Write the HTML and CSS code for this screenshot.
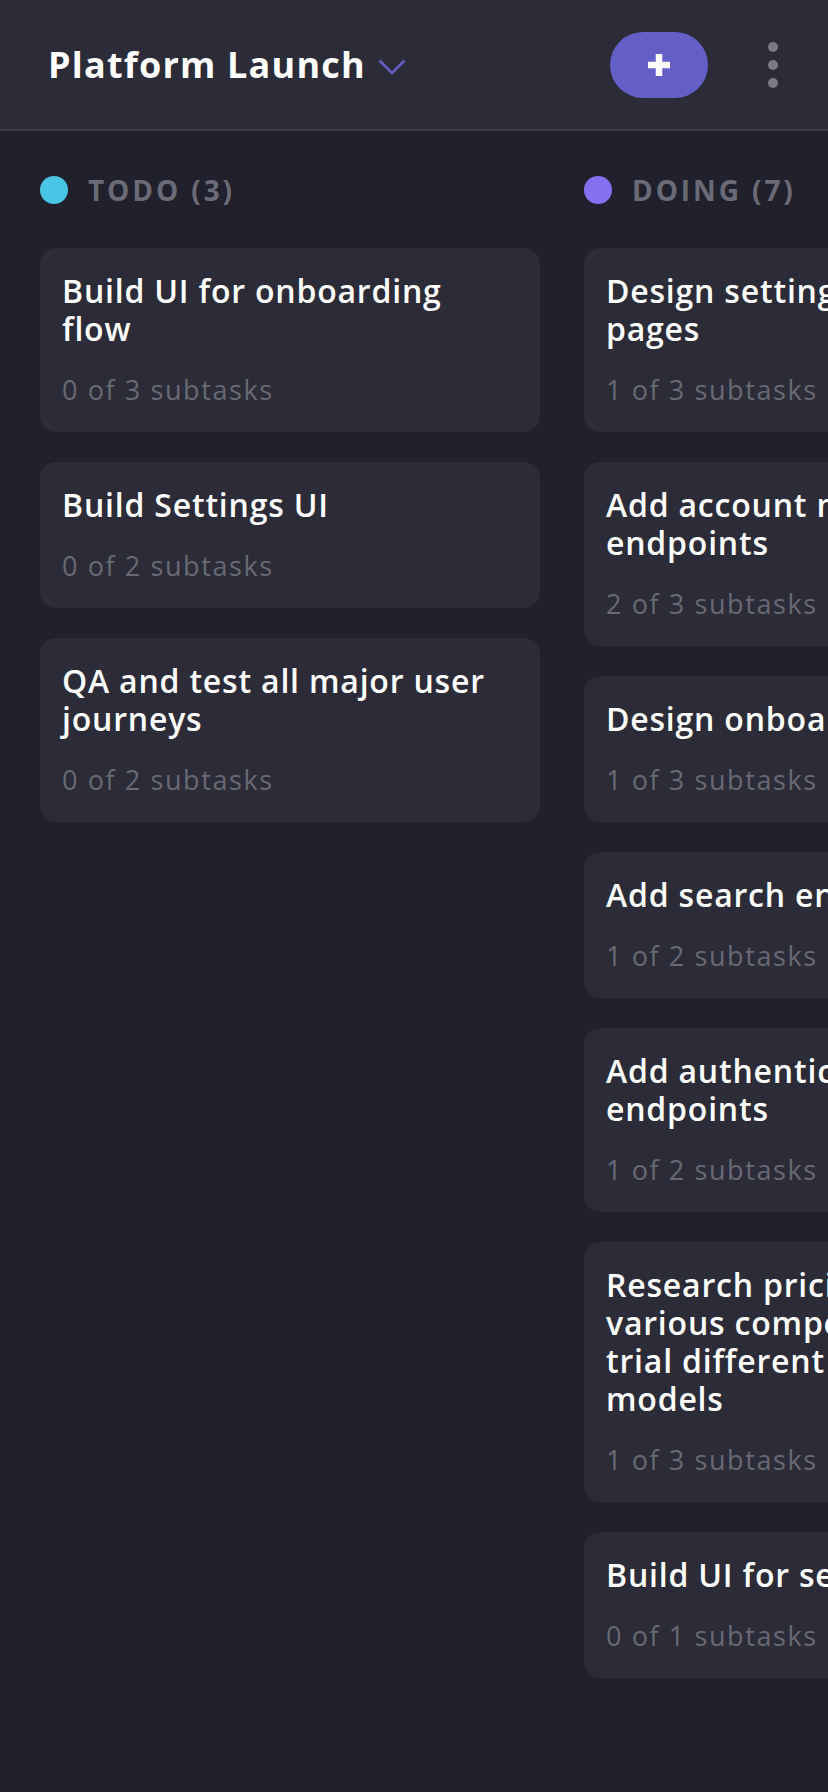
FILE: index.html
```html
<!DOCTYPE html>
<html lang="en">
<head>
<meta charset="utf-8">
<title>Platform Launch</title>
<link rel="stylesheet" href="styles.css">
</head>
<body>
<header class="topbar">
  <div class="board-title">
    <h1>Platform Launch</h1>
    <svg class="chevron" width="28" height="16" viewBox="0 0 28 16" aria-hidden="true"><path d="M1.5 1.5L14 14L26.5 1.5" fill="none" stroke="#635FC7" stroke-width="2.6"/></svg>
  </div>
  <div class="actions">
    <button class="add-btn" aria-label="Add task">
      <svg width="22" height="22" viewBox="0 0 22 22" aria-hidden="true"><path d="M11 0V22M0 11H22" stroke="#fff" stroke-width="6.5"/></svg>
    </button>
    <button class="more-btn" aria-label="More">
      <span class="dot"></span><span class="dot"></span><span class="dot"></span>
    </button>
  </div>
</header>
<main class="board">
  <section class="column">
    <h2 class="column-title"><span class="status-dot todo"></span>TODO (3)</h2>
    <div class="cards">
      <article class="card"><h3>Build UI for onboarding flow</h3><p>0 of 3 subtasks</p></article>
      <article class="card"><h3>Build Settings UI</h3><p>0 of 2 subtasks</p></article>
      <article class="card"><h3>QA and test all major user journeys</h3><p>0 of 2 subtasks</p></article>
    </div>
  </section>
  <section class="column">
    <h2 class="column-title"><span class="status-dot doing"></span>DOING (7)</h2>
    <div class="cards">
      <article class="card"><h3>Design settings and search pages</h3><p>1 of 3 subtasks</p></article>
      <article class="card"><h3>Add account management endpoints</h3><p>2 of 3 subtasks</p></article>
      <article class="card"><h3>Design onboarding flow</h3><p>1 of 3 subtasks</p></article>
      <article class="card"><h3>Add search endpoints</h3><p>1 of 2 subtasks</p></article>
      <article class="card"><h3>Add authentication endpoints</h3><p>1 of 2 subtasks</p></article>
      <article class="card"><h3>Research pricing points of various competitors and trial different business models</h3><p>1 of 3 subtasks</p></article>
      <article class="card"><h3>Build UI for search</h3><p>0 of 1 subtasks</p></article>
    </div>
  </section>
  <section class="column">
    <h2 class="column-title"><span class="status-dot done"></span>DONE (6)</h2>
    <div class="cards">
      <article class="card"><h3>Conduct 5 wireframe tests</h3><p>1 of 1 subtasks</p></article>
    </div>
  </section>
</main>
</body>
</html>
```
FILE: styles.css
```css
* { box-sizing: border-box; }
html, body {
  margin: 0;
  padding: 0;
  background: #20212C;
}
body {
  font-family: "Open Sans", "Liberation Sans", sans-serif;
  color: #fff;
  min-height: 1792px;
  overflow: hidden;
}
.topbar {
  height: 131px;
  background: #2B2C37;
  border-bottom: 2px solid #3B3C48;
  display: flex;
  align-items: center;
  justify-content: space-between;
  padding: 0 50px 0 48px;
}
.board-title {
  display: flex;
  align-items: center;
  gap: 12px;
}
.board-title h1 {
  margin: 0;
  font-size: 36px;
  font-weight: 700;
  letter-spacing: 1.2px;
  line-height: 44px;
}
.chevron { margin-top: 4px; }
.actions {
  display: flex;
  align-items: center;
  gap: 60px;
}
.add-btn {
  width: 98px;
  height: 66px;
  border: 0;
  border-radius: 33px;
  background: #635FC7;
  display: flex;
  align-items: center;
  justify-content: center;
  padding: 0;
}
.more-btn {
  border: 0;
  background: none;
  padding: 0;
  display: flex;
  flex-direction: column;
  gap: 8px;
  width: 10px;
}
.dot {
  width: 10px;
  height: 10px;
  border-radius: 50%;
  background: #7A7B86;
}
.board {
  display: flex;
  gap: 44px;
  padding: 44px 40px 40px;
}
.column {
  flex: 0 0 500px;
  width: 500px;
}
.column-title {
  margin: 0 0 43px;
  height: 30px;
  display: flex;
  align-items: center;
  gap: 20px;
  font-size: 28px;
  font-weight: 700;
  letter-spacing: 2.9px;
  color: #6A6B77;
  line-height: 30px;
}
.status-dot {
  width: 28px;
  height: 28px;
  border-radius: 50%;
  flex: none;
}
.status-dot.todo { background: #49C4E5; }
.status-dot.doing { background: #8471F2; }
.status-dot.done { background: #67E2AE; }
.cards {
  display: flex;
  flex-direction: column;
  gap: 30px;
}
.card {
  background: #2B2C37;
  border-radius: 16px;
  padding: 24px 38px 26px 22px;
}
.card h3 {
  margin: 0 0 26px;
  font-size: 32px;
  line-height: 38px;
  font-weight: 600;
  letter-spacing: 0.8px;
}
.card p {
  margin: 0;
  font-size: 27px;
  line-height: 32px;
  font-weight: 500;
  color: #686974;
  letter-spacing: 1.6px;
}
```
